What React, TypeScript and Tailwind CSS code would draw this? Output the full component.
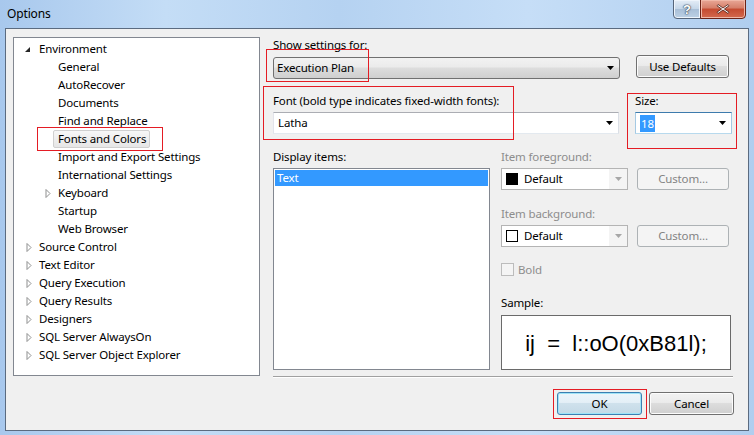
import React from 'react'

type Node = { label: string; level: 0 | 1; expander?: 'open' | 'closed'; selected?: boolean }

const tree: Node[] = [
  { label: 'Environment', level: 0, expander: 'open' },
  { label: 'General', level: 1 },
  { label: 'AutoRecover', level: 1 },
  { label: 'Documents', level: 1 },
  { label: 'Find and Replace', level: 1 },
  { label: 'Fonts and Colors', level: 1, selected: true },
  { label: 'Import and Export Settings', level: 1 },
  { label: 'International Settings', level: 1 },
  { label: 'Keyboard', level: 1, expander: 'closed' },
  { label: 'Startup', level: 1 },
  { label: 'Web Browser', level: 1 },
  { label: 'Source Control', level: 0, expander: 'closed' },
  { label: 'Text Editor', level: 0, expander: 'closed' },
  { label: 'Query Execution', level: 0, expander: 'closed' },
  { label: 'Query Results', level: 0, expander: 'closed' },
  { label: 'Designers', level: 0, expander: 'closed' },
  { label: 'SQL Server AlwaysOn', level: 0, expander: 'closed' },
  { label: 'SQL Server Object Explorer', level: 0, expander: 'closed' },
]

function Caret({ color = '#000' }: { color?: string }) {
  return (
    <svg width="7" height="4" viewBox="0 0 7 4">
      <path d="M0 0h7L3.5 4z" fill={color} />
    </svg>
  )
}

function Expander({ kind }: { kind: 'open' | 'closed' }) {
  if (kind === 'open') {
    return (
      <svg width="7" height="7" viewBox="0 0 7 7" className="mt-[1px]">
        <path d="M6 1v5H1z" fill="#262626" />
      </svg>
    )
  }
  return (
    <svg width="6" height="9" viewBox="0 0 6 9" className="ml-[2px] mt-[1px]">
      <path d="M1 0.5L5 4.5L1 8.5z" fill="none" stroke="#8e8f8f" strokeWidth="1" />
    </svg>
  )
}

function RedBox({ className }: { className: string }) {
  return <div className={`pointer-events-none absolute border border-[#e41c24] ${className}`} />
}

function WinButton({ children, primary }: { children: React.ReactNode; primary?: boolean }) {
  return (
    <div
      className={
        primary
          ? 'flex h-[23px] w-[85px] items-center justify-center rounded-[3px] border border-[#3c7fb1] bg-[linear-gradient(#edf5fa_0%,#e4eff7_45%,#cfe1ec_50%,#c4d9e6_100%)] shadow-[inset_0_0_0_1px_#9fe3f7]'
          : 'flex h-[23px] w-[85px] items-center justify-center rounded-[3px] border border-[#707070] bg-[linear-gradient(#f2f2f2_0%,#ebebeb_45%,#dddddd_50%,#cfcfcf_100%)] shadow-[inset_0_0_0_1px_#fcfcfc]'
      }
    >
      {children}
    </div>
  )
}

export default function App() {
  return (
    <div className="relative flex h-[435px] w-[754px] flex-col overflow-hidden bg-[linear-gradient(90deg,#a8c8ed_0%,#c4ddf6_22%,#b5d2f1_45%,#c6def7_70%,#b0ceef_100%)] font-['Segoe_UI','Noto_Sans',sans-serif] text-[11.5px] tracking-[-0.15px] text-black">
      {/* Title bar */}
      <div className="flex h-[28px] shrink-0 items-start">
        <div className="pl-[7px] pt-[5px] text-[12px] leading-[18px]">Options</div>
        <div className="ml-auto mr-[8px] flex -mt-px">
          <div className="flex h-[20px] w-[28px] items-center justify-center rounded-bl-[4px] border border-[#56657a] bg-[linear-gradient(#e4edf7,#c5d6e8_50%,#a9bfd7_51%,#bdd1e5)] shadow-[inset_0_0_0_1px_#eef4fb]">
            <span className="font-['Liberation_Sans',sans-serif] text-[13px] font-bold leading-none text-white [text-shadow:0_0_1px_#3c4a5c,0_0_1px_#3c4a5c,0_0_2px_#3c4a5c]">?</span>
          </div>
          <div className="-ml-px flex h-[20px] w-[46px] items-center justify-center rounded-br-[4px] border border-[#6b2317] bg-[linear-gradient(#e8a796,#d57e69_45%,#c44a30_50%,#d36a4e_100%)] shadow-[inset_0_0_0_1px_#f0b8a8]">
            <svg width="14" height="12" viewBox="0 0 14 12">
              <path d="M2 1.5L7 5L12 1.5L13 2.8L8.4 6L13 9.2L12 10.5L7 7L2 10.5L1 9.2L5.6 6L1 2.8z" fill="#fff" stroke="#4a1b12" strokeWidth="0.8" />
            </svg>
          </div>
        </div>
      </div>

      {/* Client area */}
      <div className="mx-[5px] mb-[4px] flex flex-1 border border-[#5b6b80] bg-[#f0f0f0] pl-[7px] pt-[8px]">
        {/* Tree */}
        <div className="h-[339px] w-[247px] border border-[#828790] bg-white pt-[2px]">
          {tree.map((n) => (
            <div
              key={n.label}
              className={`flex h-[18px] items-center ${n.level === 0 ? 'pl-[10px]' : 'pl-[29px]'}`}
            >
              <div className="flex w-[15px] items-center">{n.expander && <Expander kind={n.expander} />}</div>
              {n.selected ? (
                <span className="-ml-[5px] flex h-[18px] items-center rounded-[2px] border border-[#d0d0d0] bg-[linear-gradient(#f7f7f7,#e6e6e6)] pl-[4px] pr-[3px]">
                  {n.label}
                </span>
              ) : (
                <span>{n.label}</span>
              )}
            </div>
          ))}
        </div>

        {/* Settings panel */}
        <div className="ml-[13px] flex w-[463px] flex-col">
          <div className="flex items-end">
            <div className="flex flex-col">
              <div className="h-[16px] leading-[16px]">Show settings for:</div>
              <div className="mt-[4px] flex h-[22px] w-[347px] items-center rounded-[3px] border border-[#707070] bg-[linear-gradient(#f2f2f2_0%,#ebebeb_45%,#dddddd_50%,#cfcfcf_100%)] pl-[3px] pr-[5px]">
                <span>Execution Plan</span>
                <span className="ml-auto"><Caret /></span>
              </div>
            </div>
            <div className="mb-[1px] ml-[16px]">
              <div className="flex h-[23px] w-[93px] items-center justify-center rounded-[3px] border border-[#707070] bg-[linear-gradient(#f2f2f2_0%,#ebebeb_45%,#dddddd_50%,#cfcfcf_100%)] shadow-[inset_0_0_0_1px_#fcfcfc]">
                Use Defaults
              </div>
            </div>
          </div>

          <div className="mt-[14px] flex">
            <div className="flex w-[346px] flex-col">
              <div className="h-[16px] leading-[16px]">Font (bold type indicates fixed-width fonts):</div>
              <div className="mt-[3px] flex h-[22px] items-center border border-[#abadb3] border-b-[#e3e9ef] border-l-[#e2e3ea] border-r-[#dbdfe6] bg-white pl-[4px] pr-[5px]">
                <span>Latha</span>
                <span className="ml-auto"><Caret /></span>
              </div>
            </div>
            <div className="ml-[16px] flex w-[97px] flex-col">
              <div className="h-[16px] leading-[16px]">Size:</div>
              <div className="mt-[3px] flex h-[22px] items-center border border-[#3d7bad] border-b-[#b7d9ed] border-l-[#a4c9e3] border-r-[#a4c9e3] bg-white pl-[4px] pr-[5px]">
                <span className="bg-[#3399ff] px-px leading-[17px] text-white">18</span>
                <span className="ml-auto"><Caret /></span>
              </div>
            </div>
          </div>

          <div className="mt-[15px] flex">
            <div className="flex w-[217px] flex-col">
              <div className="h-[16px] leading-[16px]">Display items:</div>
              <div className="mt-[3px] h-[202px] border border-[#828790] bg-white p-px">
                <div className="flex h-[16px] items-center bg-[#3399ff] pl-[2px] text-white">Text</div>
              </div>
            </div>

            <div className="ml-[11px] flex w-[230px] flex-col text-black">
              <div className="h-[16px] leading-[16px] text-[#8d8d8d]">Item foreground:</div>
              <div className="mt-[3px] flex">
                <div className="flex h-[22px] w-[127px] items-stretch border border-[#b4b4b4] bg-white">
                  <div className="flex flex-1 items-center pl-[4px]">
                    <span className="h-[12px] w-[12px] border border-black bg-black" />
                    <span className="ml-[6px]">Default</span>
                  </div>
                  <div className="flex w-[18px] items-center justify-center bg-[#f4f4f4]"><Caret color="#a7a7a7" /></div>
                </div>
                <div className="ml-[9px] flex h-[22px] w-[92px] items-center justify-center rounded-[3px] border border-[#adb2b5] bg-[#f4f4f4] text-[#838383]">
                  Custom...
                </div>
              </div>

              <div className="mt-[16px] h-[16px] leading-[16px] text-[#8d8d8d]">Item background:</div>
              <div className="mt-[3px] flex">
                <div className="flex h-[22px] w-[127px] items-stretch border border-[#b4b4b4] bg-white">
                  <div className="flex flex-1 items-center pl-[4px]">
                    <span className="h-[12px] w-[12px] border border-black bg-white" />
                    <span className="ml-[6px]">Default</span>
                  </div>
                  <div className="flex w-[18px] items-center justify-center bg-[#f4f4f4]"><Caret color="#a7a7a7" /></div>
                </div>
                <div className="ml-[9px] flex h-[22px] w-[92px] items-center justify-center rounded-[3px] border border-[#adb2b5] bg-[#f4f4f4] text-[#838383]">
                  Custom...
                </div>
              </div>

              <div className="mt-[16px] flex h-[13px] items-center">
                <span className="h-[13px] w-[13px] border border-[#bcbcbc] bg-[#f4f4f4]" />
                <span className="ml-[4px] text-[#8d8d8d]">Bold</span>
              </div>

              <div className="mt-[19px] h-[16px] leading-[16px]">Sample:</div>
              <div className="mt-[4px] flex h-[55px] items-center justify-center border border-[#6a6a6a] bg-white pt-[3px] font-['Liberation_Sans',sans-serif] text-[22px] leading-none tracking-normal whitespace-pre">
                {'ij  =  l::oO(0xB81l);'}
              </div>
            </div>
          </div>

          <div className="mt-[6px] h-px w-[460px] bg-[#a0a0a0] shadow-[0_1px_0_#ffffff]" />

          <div className="mr-[2px] mt-[15px] flex justify-end gap-[7px]">
            <WinButton primary>OK</WinButton>
            <WinButton>Cancel</WinButton>
          </div>
        </div>
      </div>

      {/* Annotation boxes */}
      <RedBox className="left-[37px] top-[127px] h-[24px] w-[126px]" />
      <RedBox className="left-[266px] top-[49px] h-[33px] w-[103px]" />
      <RedBox className="left-[263px] top-[86px] h-[54px] w-[251px]" />
      <RedBox className="left-[627px] top-[93px] h-[56px] w-[110px]" />
      <RedBox className="left-[553px] top-[389px] h-[30px] w-[94px]" />
    </div>
  )
}
